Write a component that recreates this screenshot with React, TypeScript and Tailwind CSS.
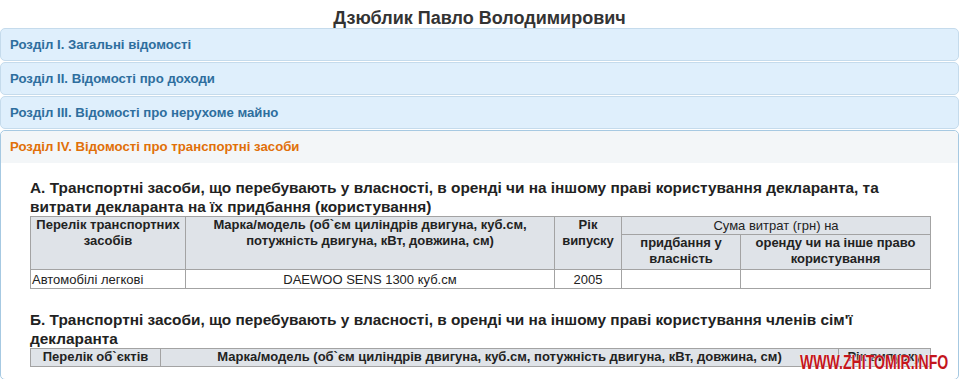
import React from 'react';

const sections = [
  'Розділ I. Загальні відомості',
  'Розділ II. Відомості про доходи',
  'Розділ III. Відомості про нерухоме майно',
];

const th = 'border border-[#a3a3a3] bg-[#dfe3e8] font-bold text-center align-top px-1 leading-[16px]';
const td = 'border border-[#a3a3a3] px-[1px] leading-[17px] align-middle';

const App: React.FC = () => {
  return (
    <div className="relative w-[959px] h-[379px] overflow-hidden bg-white text-[#222] font-['Liberation_Sans',Arial,sans-serif]">
      {/* Title */}
      <h1 className="h-[28px] pt-[8px] text-center text-[18px] leading-[20px] font-bold text-[#333]">
        Дзюблик Павло Володимирович
      </h1>

      {/* Collapsed sections */}
      {sections.map((s) => (
        <div
          key={s}
          className="mb-px h-[33px] rounded-[5px] border border-[#c5dbec] bg-[#dfeffc] px-[9px] text-[13.2px] font-bold leading-[31px] text-[#2e6e9e]"
        >
          {s}
        </div>
      ))}

      {/* Active section */}
      <div className="mt-px rounded-[5px] border border-[#a6c9e2] bg-white">
        <div className="h-[32px] rounded-t-[5px] bg-[#f3f6f8] px-[9px] text-[13.2px] font-bold leading-[32px] text-[#e17009]">
          Розділ IV. Відомості про транспортні засоби
        </div>
        <div className="px-[29px] pt-[15px] pb-[12px] text-[13px]">
          <h3 className="text-[15.4px] font-bold leading-[19px] text-[#222]">
            А. Транспортні засоби, що перебувають у власності, в оренді чи на іншому праві користування декларанта, та витрати декларанта на їх придбання (користування)
          </h3>
          <table className="w-[900px] table-fixed border-collapse text-[13px]">
            <colgroup>
              <col className="w-[155px]" />
              <col className="w-[369px]" />
              <col className="w-[67px]" />
              <col className="w-[119px]" />
              <col className="w-[190px]" />
            </colgroup>
            <tbody>
              <tr className="h-[18px]">
                <th rowSpan={2} className={th}>Перелік транспортних засобів</th>
                <th rowSpan={2} className={th}>Марка/модель (об`єм циліндрів двигуна, куб.см, потужність двигуна, кВт, довжина, см)</th>
                <th rowSpan={2} className={th}>Рік випуску</th>
                <th colSpan={2} className="border border-[#a3a3a3] bg-[#dfe3e8] text-center font-normal leading-[16px]">Сума витрат (грн) на</th>
              </tr>
              <tr className="h-[35px]">
                <th className={th}>придбання у власність</th>
                <th className={th}>оренду чи на інше право користування</th>
              </tr>
              <tr className="h-[19px]">
                <td className={td}>Автомобілі легкові</td>
                <td className={`${td} text-center`}>DAEWOO SENS 1300 куб.см</td>
                <td className={`${td} text-center`}>2005</td>
                <td className={td}></td>
                <td className={td}></td>
              </tr>
            </tbody>
          </table>

          <h3 className="mt-[21px] text-[15.4px] font-bold leading-[19px] text-[#222]">
            Б. Транспортні засоби, що перебувають у власності, в оренді чи на іншому праві користування членів сім'ї декларанта
          </h3>
          <table className="w-[900px] table-fixed border-collapse text-[13px]">
            <colgroup>
              <col className="w-[130px]" />
              <col className="w-[678px]" />
              <col className="w-[92px]" />
            </colgroup>
            <tbody>
              <tr className="h-[18px]">
                <th className={th}>Перелік об`єктів</th>
                <th className={th}>Марка/модель (об`єм циліндрів двигуна, куб.см, потужність двигуна, кВт, довжина, см)</th>
                <th className={th}>Рік випуску</th>
              </tr>
            </tbody>
          </table>
        </div>
      </div>

      {/* Watermark */}
      <div className="absolute left-[800px] top-[350px] origin-left scale-x-[0.67] whitespace-nowrap text-[21px] font-bold leading-[24px] text-[#c4161c] [text-shadow:0_0_1px_#fff,0_0_2px_#fff]">
        WWW.ZHITOMIR.INFO
      </div>
    </div>
  );
};

export default App;
